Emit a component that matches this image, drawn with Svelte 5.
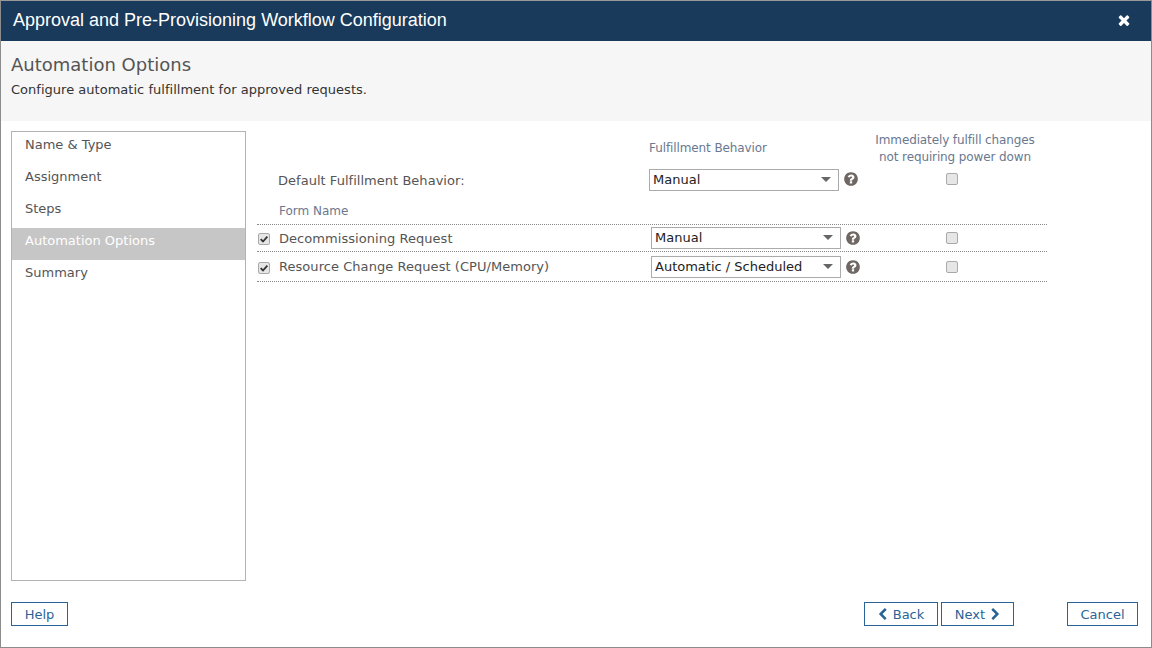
<script lang="ts">
  const steps = ["Name & Type", "Assignment", "Steps", "Automation Options", "Summary"];
  const active = "Automation Options";
  const forms = [
    { name: "Decommissioning Request", behavior: "Manual" },
    { name: "Resource Change Request (CPU/Memory)", behavior: "Automatic / Scheduled" },
  ];
</script>

{#snippet help()}
  <svg class="help" viewBox="0 0 1792 1792" aria-hidden="true">
    <path d="M1024 1376v-192q0-14-9-23t-23-9h-192q-14 0-23 9t-9 23v192q0 14 9 23t23 9h192q14 0 23-9t9-23zm256-672q0-88-55.5-163t-138.5-116-170-41q-243 0-371 213-15 24 8 42l132 100q7 6 19 6 16 0 25-12 53-68 86-92 34-24 86-24 48 0 85.5 26t37.5 59q0 38-20 61t-68 45q-63 28-115.5 86.5t-52.5 125.5v36q0 14 9 23t23 9h192q14 0 23-9t9-23q0-19 21.5-49.5t54.5-49.5q32-18 49-28.5t46-35 44.5-48 28-60.5 12.5-81zm384 192q0 209-103 385.5t-279.5 279.5-385.5 103-385.5-103-279.5-279.5-103-385.5 103-385.5 279.5-279.5 385.5-103 385.5 103 279.5 279.5 103 385.5z" />
  </svg>
{/snippet}

{#snippet select(value: string)}
  <div class="select">
    <span>{value}</span>
    <i class="caret"></i>
  </div>
{/snippet}

{#snippet checkbox(checked: boolean)}
  <span class="check">
    {#if checked}
      <svg viewBox="0 0 12 12" aria-hidden="true"><path d="M2 6.2 4.8 9 10 3.2" /></svg>
    {/if}
  </span>
{/snippet}

<div class="dialog">
  <header class="titlebar">
    <h1>Approval and Pre-Provisioning Workflow Configuration</h1>
    <svg class="close" viewBox="0 0 1792 1792" aria-hidden="true">
      <path d="M1490 1322q0 40-28 68l-136 136q-28 28-68 28t-68-28l-294-294-294 294q-28 28-68 28t-68-28l-136-136q-28-28-28-68t28-68l294-294-294-294q-28-28-28-68t28-68l136-136q28-28 68-28t68 28l294 294 294-294q28-28 68-28t68 28l136 136q28 28 28 68t-28 68l-294 294 294 294q28 28 28 68z" />
    </svg>
  </header>

  <section class="intro">
    <h2>Automation Options</h2>
    <p>Configure automatic fulfillment for approved requests.</p>
  </section>

  <div class="body">
    <nav class="steps">
      {#each steps as step}
        <div class="step" class:active={step === active}>{step}</div>
      {/each}
    </nav>

    <div class="content">
      <div class="head">
        <span></span>
        <span class="col-head behavior">Fulfillment Behavior</span>
        <span class="col-head immediate">Immediately fulfill changes<br />not requiring power down</span>
      </div>
      <div class="default">
        <span class="default-label">Default Fulfillment Behavior:</span>
        {@render select("Manual")}
        {@render help()}
        <div class="cell-check">{@render checkbox(false)}</div>
      </div>
      <div class="col-head form-name">Form Name</div>
      <div class="rows">
        {#each forms as form}
          <div class="row">
            <div class="row-check">{@render checkbox(true)}</div>
            <span class="name">{form.name}</span>
            {@render select(form.behavior)}
            {@render help()}
            <div class="cell-check">{@render checkbox(false)}</div>
          </div>
        {/each}
      </div>
    </div>
  </div>

  <footer class="actions">
    <button class="btn help-btn">Help</button>
    <div class="nav">
      <button class="btn back">
        <svg viewBox="0 0 1792 1792" aria-hidden="true"><path d="M1427 301l-531 531 531 531q19 19 19 45t-19 45l-166 166q-19 19-45 19t-45-19l-742-742q-19-19-19-45t19-45l742-742q19-19 45-19t45 19l166 166q19 19 19 45t-19 45z" /></svg>
        Back
      </button>
      <button class="btn next">
        Next
        <svg viewBox="0 0 1792 1792" aria-hidden="true"><path d="M1363 877l-742 742q-19 19-45 19t-45-19l-166-166q-19-19-19-45t19-45l531-531-531-531q-19-19-19-45t19-45l166-166q19-19 45-19t45 19l742 742q19 19 19 45t-19 45z" /></svg>
      </button>
    </div>
    <button class="btn cancel">Cancel</button>
  </footer>
</div>

<style>
  :global(body) {
    margin: 0;
    background: #fff;
  }
  .dialog {
    box-sizing: border-box;
    width: 1152px;
    height: 648px;
    display: flex;
    flex-direction: column;
    border: 1px solid #8c8c8c;
    border-top-color: #999;
    font-family: "DejaVu Sans", Verdana, sans-serif;
    font-size: 13px;
    color: #555;
    overflow: hidden;
  }
  .titlebar {
    height: 40px;
    box-sizing: border-box;
    flex: none;
    display: flex;
    align-items: center;
    justify-content: space-between;
    padding: 0 19px 2px 12px;
    background: #193a5a;
  }
  h1 {
    margin: 0;
    font-family: "Liberation Sans", Arial, sans-serif;
    font-size: 18px;
    font-weight: 400;
    color: #fff;
  }
  .close {
    width: 16px;
    height: 16px;
    fill: #fff;
  }
  .intro {
    height: 80px;
    flex: none;
    box-sizing: border-box;
    padding: 14px 10px 0;
    background: #f6f6f6;
  }
  h2 {
    margin: 0;
    font-size: 18px;
    line-height: 20px;
    font-weight: 400;
    color: #555;
  }
  .intro p {
    margin: 6px 0 0;
    line-height: 17px;
    letter-spacing: 0.02px;
    color: #333;
  }
  .body {
    flex: 1;
    display: flex;
    padding: 10px 10px 0;
    min-height: 0;
  }
  .steps {
    box-sizing: border-box;
    width: 235px;
    height: 450px;
    flex: none;
    border: 1px solid #b3b3b3;
  }
  .step {
    height: 32px;
    box-sizing: border-box;
    padding: 5px 13px 0;
    line-height: 16px;
  }
  .step.active {
    background: #c6c6c6;
    color: #fff;
  }
  .content {
    width: 790px;
    margin-left: 11px;
  }
  .col-head {
    font-size: 12px;
    line-height: 17px;
    color: #6a7890;
  }
  .head {
    height: 38px;
    display: grid;
    grid-template-columns: 392px 216px 180px;
  }
  .behavior {
    margin-top: 9px;
    white-space: nowrap;
    letter-spacing: -0.1px;
  }
  .immediate {
    padding-top: 1px;
    text-align: center;
    letter-spacing: -0.12px;
  }
  .default {
    height: 22px;
    display: flex;
    align-items: center;
    padding-left: 21px;
  }
  .default-label {
    width: 371px;
    letter-spacing: 0.03px;
  }
  .default .help,
  .default .cell-check {
    margin-bottom: 2px;
  }
  .select {
    box-sizing: border-box;
    width: 190px;
    height: 22px;
    flex: none;
    display: flex;
    align-items: center;
    justify-content: space-between;
    padding: 0 7px 1px 3px;
    border: 1px solid #ababab;
    background: #fff;
    color: #222;
  }
  .caret {
    width: 0;
    height: 0;
    border-left: 5px solid transparent;
    border-right: 5px solid transparent;
    border-top: 5px solid #666;
  }
  .help {
    width: 16px;
    height: 16px;
    margin-left: 4px;
    flex: none;
    fill: #6f6763;
  }
  .cell-check {
    margin-left: 87px;
    flex: none;
  }
  .check {
    box-sizing: border-box;
    width: 12px;
    height: 12px;
    flex: none;
    display: block;
    border: 1px solid #a9a9a9;
    border-radius: 2px;
    background: #e6e6e6;
  }
  .check svg {
    display: block;
    width: 10px;
    height: 10px;
    fill: none;
    stroke: #333;
    stroke-width: 2.2;
  }
  .form-name {
    margin: 10px 0 0 22px;
    height: 23px;
    line-height: 21px;
  }
  .rows {
    border-top: 1px dotted #888;
  }
  .row {
    height: 27px;
    box-sizing: border-box;
    display: flex;
    align-items: center;
    padding-left: 1px;
    border-bottom: 1px dotted #888;
  }
  .row + .row {
    height: 30px;
  }
  .row .cell-check {
    margin-left: 85px;
  }
  .row-check {
    margin-top: 2px;
  }
  .name {
    width: 372px;
    margin-left: 9px;
    letter-spacing: 0.05px;
  }
  .actions {
    display: flex;
    padding: 0 13px 21px 10px;
    align-items: center;
  }
  .nav {
    margin-left: auto;
    display: flex;
    gap: 3px;
    margin-right: 53px;
  }
  .btn {
    box-sizing: border-box;
    height: 24px;
    padding: 0;
    border: 1px solid #2a6496;
    background: #fff;
    color: #2a6496;
    font: inherit;
    display: flex;
    align-items: center;
    justify-content: center;
    gap: 4px;
  }
  .btn svg {
    width: 13px;
    height: 13px;
    fill: currentColor;
  }
  .help-btn {
    width: 57px;
  }
  .back {
    width: 74px;
    padding-right: 2px;
  }
  .next {
    width: 73px;
    padding-left: 2px;
  }
  .cancel {
    width: 71px;
  }
</style>
